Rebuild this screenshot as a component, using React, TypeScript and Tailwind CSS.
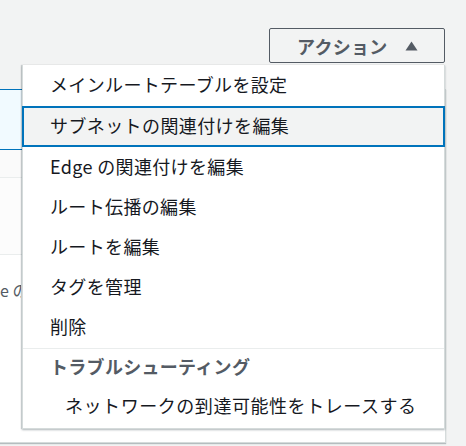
import React from "react";

const items = [
  "メインルートテーブルを設定",
  "サブネットの関連付けを編集",
  "Edge の関連付けを編集",
  "ルート伝播の編集",
  "ルートを編集",
  "タグを管理",
  "削除",
];

export default function App() {
  return (
    <div
      className="relative w-[466px] h-[446px] bg-[#f2f3f3] overflow-hidden"
      style={{ fontFamily: '"Noto Sans CJK JP", "Noto Sans", sans-serif' }}
    >
      <div className="h-[89px] flex justify-end items-start pt-[28px] pr-[21px]">
        <button className="w-[176px] h-[35px] border border-[#545b64] rounded-[2px] bg-[#f2f3f3] flex items-center pl-[27px] pr-[26px] justify-between text-[#545b64] font-bold text-[18px] tracking-[0.3px]">
          <span className="leading-none">アクション</span>
          <svg width="13" height="10" viewBox="0 0 13 10">
            <polygon points="6.5,0.5 12.5,9.5 0.5,9.5" fill="#545b64" />
          </svg>
        </button>
      </div>
      <div className="w-[446px] h-[354px] bg-white border-r border-b border-[#d5dbdb] shadow-[0_1px_1px_rgba(0,28,36,0.25)]">
        <div className="h-[61px] border-y border-[#0073bb] bg-[#f1faff]" />
        <div className="h-[28px] bg-[#fafafa] border-b border-[#eaeded]" />
        <div className="h-[77px] bg-[#fcfcfc] border-b border-[#eaeded]" />
        <div className="h-[70px] flex items-center">
          <div className="w-[21px] overflow-hidden whitespace-nowrap text-[16px] text-[#545b64] leading-none">
            e の
          </div>
        </div>
      </div>

      <div className="absolute left-[22px] top-[65px] w-[423px] h-[364px] bg-white border border-[#d5dbdb] border-t-0 shadow-[0_1px_2px_rgba(0,28,36,0.3),-1px_0_1px_rgba(0,28,36,0.15)] flex flex-col">
        {items.map((t, i) =>
          i === 1 ? (
            <div
              key={t}
              className="h-[41px] border-2 border-[#0073bb] bg-[#f2f3f3] flex items-center pl-[26px] text-[18px] tracking-[0.4px] text-[#16191f] -mx-px"
            >
              <span className="leading-none -mt-[3px]">{t}</span>
            </div>
          ) : (
            <div
              key={t}
              className={`${i === 0 ? "h-[41px]" : "h-[40px]"} flex items-center pl-[27px] text-[18px] tracking-[0.35px] text-[#16191f]`}
            >
              <span className="leading-none -mt-[3px]">{t}</span>
            </div>
          )
        )}
        <div className="mt-[1px] border-t border-[#eaeded] h-[37px] flex items-center pl-[27px] text-[18px] font-bold tracking-[0.3px] text-[#545b64]">
          <span className="leading-none -mt-[2px]">トラブルシューティング</span>
        </div>
        <div className="h-[42px] flex items-center pl-[42px] text-[18px] tracking-[0.55px] text-[#16191f]">
          <span className="leading-none -mt-[2px]">ネットワークの到達可能性をトレースする</span>
        </div>
      </div>
    </div>
  );
}
